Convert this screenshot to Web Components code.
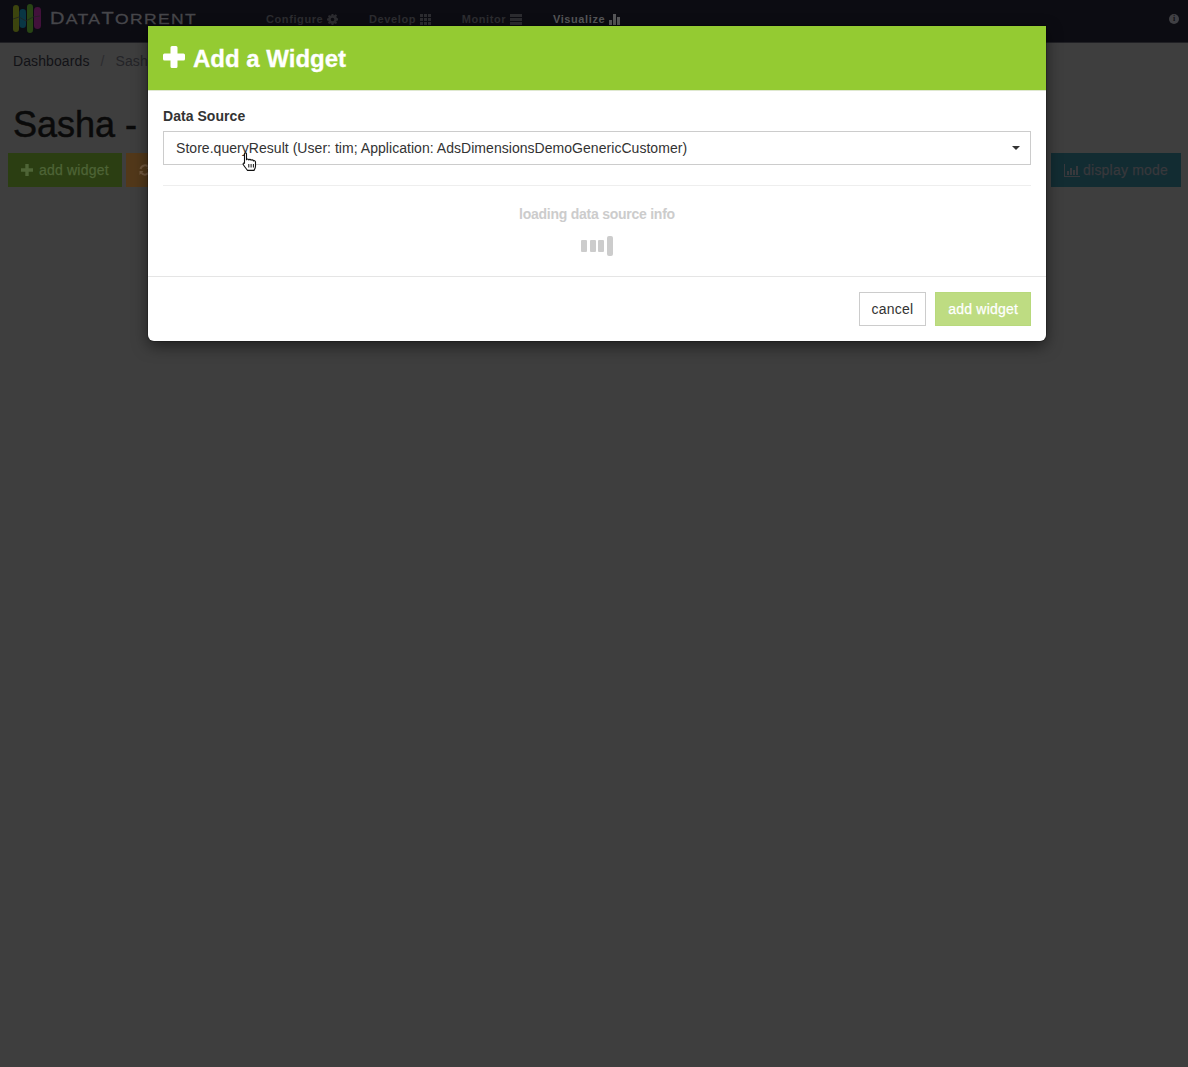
<!DOCTYPE html>
<html lang="en">
<head>
<meta charset="utf-8">
<title>Add a Widget</title>
<style>
	html, body { margin: 0; height: 100%; background: #3e3e3e; }
	body { font-family: "Liberation Sans", Arial, sans-serif; font-size: 14px; color: #111; position: relative; min-height: 1067px; overflow: hidden; }
</style>
</head>
<body>

<dt-navbar>
	<dt-nav-item label="Configure" icon="gear"></dt-nav-item>
	<dt-nav-item label="Develop" icon="grid"></dt-nav-item>
	<dt-nav-item label="Monitor" icon="server"></dt-nav-item>
	<dt-nav-item label="Visualize" icon="bars" active></dt-nav-item>
</dt-navbar>
<dt-breadcrumb></dt-breadcrumb>
<dt-page-title>Sasha -</dt-page-title>
<dt-toolbar>
	<dt-tool-button slot="left" kind="green" icon="plus">add widget</dt-tool-button>
	<dt-tool-button slot="left" kind="orange" icon="refresh"></dt-tool-button>
	<dt-tool-button slot="right" kind="teal" icon="chart">display mode</dt-tool-button>
</dt-toolbar>

<dt-modal heading="Add a Widget">
	<dt-select label="Data Source" value="Store.queryResult (User: tim; Application: AdsDimensionsDemoGenericCustomer)"></dt-select>
	<dt-loading text="loading data source info"></dt-loading>
	<dt-modal-button slot="footer">cancel</dt-modal-button>
	<dt-modal-button slot="footer" primary>add widget</dt-modal-button>
</dt-modal>

<dt-hand-cursor></dt-hand-cursor>

<script>
const ICONS = {
	gear: `<svg viewBox="0 0 12 12" width="11" height="11"><path fill="currentColor" fill-rule="evenodd" d="M5 0h2l.3 1.600 1-.4L9.600.3l1.400 1.400-.9 1.300.5 1L12 5v2l-1.400.3-.5 1 .9 1.300-1.400 1.400-1.300-.9-1 .5L7 12H5l-.3-1.400-1-.5-1.300.9L1 9.600l.9-1.300-.5-1L0 7V5l1.400-.3.5-1L1 2.400 2.400 1l1.300.9 1-.5zM6 4a2 2 0 1 0 0 4 2 2 0 0 0 0-4z"/></svg>`,
	grid: `<svg viewBox="0 0 11 11" width="11" height="11"><path fill="currentColor" d="M0 0h3v3H0zM4 0h3v3H4zM8 0h3v3H8zM0 4h3v3H0zM4 4h3v3H4zM8 4h3v3H8zM0 8h3v3H0zM4 8h3v3H4zM8 8h3v3H8z"/></svg>`,
	server: `<svg viewBox="0 0 12 11" width="12" height="11"><path fill="currentColor" d="M0 0h12v3H0zM0 4h12v3H0zM0 8h12v3H0z"/></svg>`,
	bars: `<svg viewBox="0 0 11 11" width="11" height="11"><path fill="currentColor" d="M0 6h3v5H0zM4 0h3v11H4zM8 3h3v8H8z"/></svg>`,
	plus: `<svg viewBox="0 0 12 12" width="12" height="12"><path fill="currentColor" d="M4.300 0h3.400v4.300H12v3.400H7.700V12H4.300V7.700H0V4.300h4.300z"/></svg>`,
	refresh: `<svg viewBox="0 0 12 12" width="12" height="12"><path fill="none" stroke="currentColor" stroke-width="2" d="M1.500 5a4.600 4.600 0 0 1 8.300-1.600M10.500 7a4.600 4.600 0 0 1-8.300 1.600"/><path fill="currentColor" d="M11.500 1v4h-4zM.5 11V7h4z"/></svg>`,
	chart: `<svg viewBox="0 0 16 13" width="16" height="13" style="margin-right:-3px"><path fill="currentColor" d="M0 0h1v12h15v1H0zM3 7h2v4H3zM6 4h2v7H6zM9 6h2v5H9zM12 2h2v9h-2z"/></svg>`,
};

class DtNavbar extends HTMLElement {
	constructor() {
		super();
		this.attachShadow({ mode: "open" });
		this.shadowRoot.innerHTML = `
			<style>
				:host { display: flex; align-items: center; height: 43px; box-sizing: border-box; background: #0c0c12; padding: 0 9px 5px 13px; border-bottom: 1px solid #202024; }
				.logo { display: block; flex: none; margin-top: 1px; }
				.brand { width: 147px; margin: 1px 0 0 9px; color: #46464a; font-size: 14px; line-height: 14px; letter-spacing: 1.100px; white-space: nowrap; flex: none; transform: scaleX(1.25); transform-origin: left center; -webkit-text-stroke: .3px #46464a; }
				.brand b { font-weight: 400; font-size: 16px; }
				nav { display: flex; gap: 30.700px; margin: 1px 0 0 69px; flex: 1; }
				.info { width: 10px; height: 10px; border-radius: 50%; background: #404044; color: #101014; font: bold 8px/10px "Liberation Serif", serif; text-align: center; margin-top: 1px; }
			</style>
			<svg class="logo" width="28" height="30" viewBox="0 0 28 30">
				<rect x="0" y="1" width="6" height="27" rx="3" fill="#3c440e"/>
				<rect x="6.500" y="5" width="6.500" height="19" rx="3.200" fill="#093644"/>
				<rect x="14" y="0" width="6" height="29" rx="3" fill="#284514"/>
				<rect x="21" y="3" width="7" height="22" rx="3.400" fill="#42113b"/>
				<path d="M0 15l6-2 7 4 7-4 7-1" fill="none" stroke="#222" stroke-width=".8"/>
			</svg>
			<div class="brand"><b>D</b>ATA<b>T</b>ORRENT</div>
			<nav><slot></slot></nav>
			<div class="info">i</div>
		`;
	}
}

class DtNavItem extends HTMLElement {
	constructor() {
		super();
		this.attachShadow({ mode: "open" });
	}

	connectedCallback() {
		const color = this.hasAttribute("active") ? "#565658" : "#2c2c30";
		this.shadowRoot.innerHTML = `
			<style>
				:host { display: inline-flex; align-items: center; gap: 4px; color: ${color}; font-size: 11px; font-weight: 700; letter-spacing: .6px; white-space: nowrap; }
				svg { display: block; }
			</style>
			<span>${this.getAttribute("label")}</span>${ICONS[this.getAttribute("icon")]}
		`;
	}
}

class DtBreadcrumb extends HTMLElement {
	constructor() {
		super();
		this.attachShadow({ mode: "open" });
		this.shadowRoot.innerHTML = `
			<style>
				:host { display: flex; gap: 11px; padding: 10px 13px 0; height: 23px; line-height: 16px; color: #121216; font-size: 14px; letter-spacing: .1px; }
				i { font-style: normal; color: #2c2c2f; }
				span { color: #242428; }
			</style>
			<a>Dashboards</a><i>/</i><span>Sasha</span>
		`;
	}
}

class DtPageTitle extends HTMLElement {
	constructor() {
		super();
		this.attachShadow({ mode: "open" });
		this.shadowRoot.innerHTML = `
			<style>
				:host { display: block; padding: 29px 13px 0; height: 40px; color: #0a0a0a; font-size: 36px; line-height: 40px; white-space: nowrap; -webkit-text-stroke: .5px #0a0a0a; }
			</style>
			<slot></slot>
		`;
	}
}

class DtToolbar extends HTMLElement {
	constructor() {
		super();
		this.attachShadow({ mode: "open" });
		this.shadowRoot.innerHTML = `
			<style>
				:host { display: flex; justify-content: space-between; padding: 8px 7px 0 8px; }
				div { display: flex; gap: 4px; }
			</style>
			<div><slot name="left"></slot></div>
			<div><slot name="right"></slot></div>
		`;
	}
}

class DtToolButton extends HTMLElement {
	constructor() {
		super();
		this.attachShadow({ mode: "open" });
	}

	connectedCallback() {
		const kinds = {
			green: ["#2b3e12", "#4e6436"],
			orange: ["#52381a", "#72583e"],
			teal: ["#122c32", "#38383c"],
		};
		const [bg, fg] = kinds[this.getAttribute("kind")];
		this.shadowRoot.innerHTML = `
			<style>
				:host { display: inline-flex; align-items: center; gap: 6px; height: 34px; box-sizing: border-box; padding: 0 13px; background: ${bg}; color: ${fg}; font-size: 14px; letter-spacing: .2px; white-space: nowrap; -webkit-text-stroke: .25px ${fg}; }
				svg { display: block; }
			</style>
			${ICONS[this.getAttribute("icon")]}<span><slot></slot></span>
		`;
	}
}

class DtModal extends HTMLElement {
	constructor() {
		super();
		this.attachShadow({ mode: "open" });
	}

	connectedCallback() {
		this.shadowRoot.innerHTML = `
			<style>
				:host { position: absolute; left: 148px; top: 26px; width: 898px; background: #fff; border-radius: 0 0 6px 6px; box-shadow: 0 5px 15px rgba(0,0,0,.5), 0 0 0 1px rgba(0,0,0,.2); color: #333; }
				header { display: flex; align-items: center; gap: 8px; height: 65px; box-sizing: border-box; padding: 0 15px; background: #94cb32; border-bottom: 1px solid #dfe8d0; color: #fff; }
				header svg { display: block; margin-top: -2px; }
				h3 { margin: 1px 0 0; font-size: 24px; font-weight: 700; line-height: 30px; -webkit-text-stroke: .3px #fff; }
				.body { padding: 16px 15px 20px; }
				footer { display: flex; justify-content: flex-end; gap: 9px; padding: 15px; border-top: 1px solid #e5e5e5; }
			</style>
			<header>
				<svg viewBox="0 0 22 22" width="22" height="22"><path fill="#fff" d="M7.500 1.500Q7.500 0 9 0h4q1.500 0 1.500 1.500V7.500h6q1.500 0 1.500 1.500v4q0 1.500-1.500 1.500h-6v6Q14.500 22 13 22H9q-1.500 0-1.500-1.500v-6h-6Q0 14.500 0 13V9q0-1.500 1.500-1.500h6z"/></svg>
				<h3>${this.getAttribute("heading")}</h3>
			</header>
			<div class="body"><slot></slot></div>
			<footer><slot name="footer"></slot></footer>
		`;
	}
}

class DtSelect extends HTMLElement {
	constructor() {
		super();
		this.attachShadow({ mode: "open" });
	}

	connectedCallback() {
		this.shadowRoot.innerHTML = `
			<style>
				:host { display: block; padding-bottom: 20px; border-bottom: 1px solid #eee; }
				label { display: block; margin-bottom: 6px; font-size: 14px; line-height: 18px; font-weight: 700; color: #333; letter-spacing: .05px; }
				.box { display: flex; align-items: center; justify-content: space-between; height: 34px; box-sizing: border-box; padding: 0 10px 0 12px; border: 1px solid #ccc; font-size: 14px; letter-spacing: .04px; color: #333; }
				.caret { width: 0; height: 0; border: 4px solid transparent; border-top-color: #333; border-bottom: 0; }
			</style>
			<label>${this.getAttribute("label")}</label>
			<div class="box"><span>${this.getAttribute("value")}</span><span class="caret"></span></div>
		`;
	}
}

class DtLoading extends HTMLElement {
	constructor() {
		super();
		this.attachShadow({ mode: "open" });
	}

	connectedCallback() {
		this.shadowRoot.innerHTML = `
			<style>
				:host { display: flex; flex-direction: column; align-items: center; padding-top: 19px; color: #ccc; font-size: 14px; letter-spacing: -.25px; font-weight: 700; line-height: 18px; }
				.bars { display: flex; align-items: center; gap: 2.700px; height: 20px; margin-top: 13px; }
				.bars i { display: block; width: 6px; height: 12px; background: #ccc; border-radius: 1px; }
				.bars i:last-child { height: 20px; border-radius: 2px; }
			</style>
			<div>${this.getAttribute("text")}</div>
			<div class="bars"><i></i><i></i><i></i><i></i></div>
		`;
	}
}

class DtModalButton extends HTMLElement {
	constructor() {
		super();
		this.attachShadow({ mode: "open" });
	}

	connectedCallback() {
		const primary = this.hasAttribute("primary");
		const fg = primary ? "#fff" : "#333";
		this.shadowRoot.innerHTML = `
			<style>
				:host { display: inline-flex; align-items: center; height: 34px; box-sizing: border-box; padding: 0 12px; font-size: 14px; letter-spacing: .2px; border: 1px solid ${primary ? "#b8d97c" : "#ccc"}; background: ${primary ? "#bedc82" : "#fff"}; color: ${fg}; ${primary ? "-webkit-text-stroke: .25px #fff;" : ""} }
			</style>
			<slot></slot>
		`;
	}
}

class DtHandCursor extends HTMLElement {
	constructor() {
		super();
		this.attachShadow({ mode: "open" });
		this.shadowRoot.innerHTML = `
			<style>
				:host { position: absolute; left: 242px; top: 152px; width: 16px; height: 20px; }
				svg { display: block; }
			</style>
			<svg viewBox="0 0 16 20" width="16" height="20">
				<path fill="#fff" stroke="#111" stroke-width="1.100" stroke-linejoin="round" d="M2.500 1.800c0-1.300 2-1.300 2 0v6c.3-1 2.200-1 2.300.2.300-.9 2.200-.9 2.300.3.400-.8 2.200-.6 2.300.6.400-.6 2.100-.3 2.100 1v4c0 2-.7 3-1.500 4.500H5.500C4.500 17 3.200 15.500 1.500 13 .7 11.800 1.300 10.500 2.500 11.300z"/>
				<path fill="none" stroke="#111" d="M6.800 12v3.500M9.100 12v3.500M11.400 12v3.500"/>
			</svg>
		`;
	}
}

customElements.define("dt-navbar", DtNavbar);
customElements.define("dt-nav-item", DtNavItem);
customElements.define("dt-breadcrumb", DtBreadcrumb);
customElements.define("dt-page-title", DtPageTitle);
customElements.define("dt-toolbar", DtToolbar);
customElements.define("dt-tool-button", DtToolButton);
customElements.define("dt-modal", DtModal);
customElements.define("dt-select", DtSelect);
customElements.define("dt-loading", DtLoading);
customElements.define("dt-modal-button", DtModalButton);
customElements.define("dt-hand-cursor", DtHandCursor);
</script>
</body>
</html>
